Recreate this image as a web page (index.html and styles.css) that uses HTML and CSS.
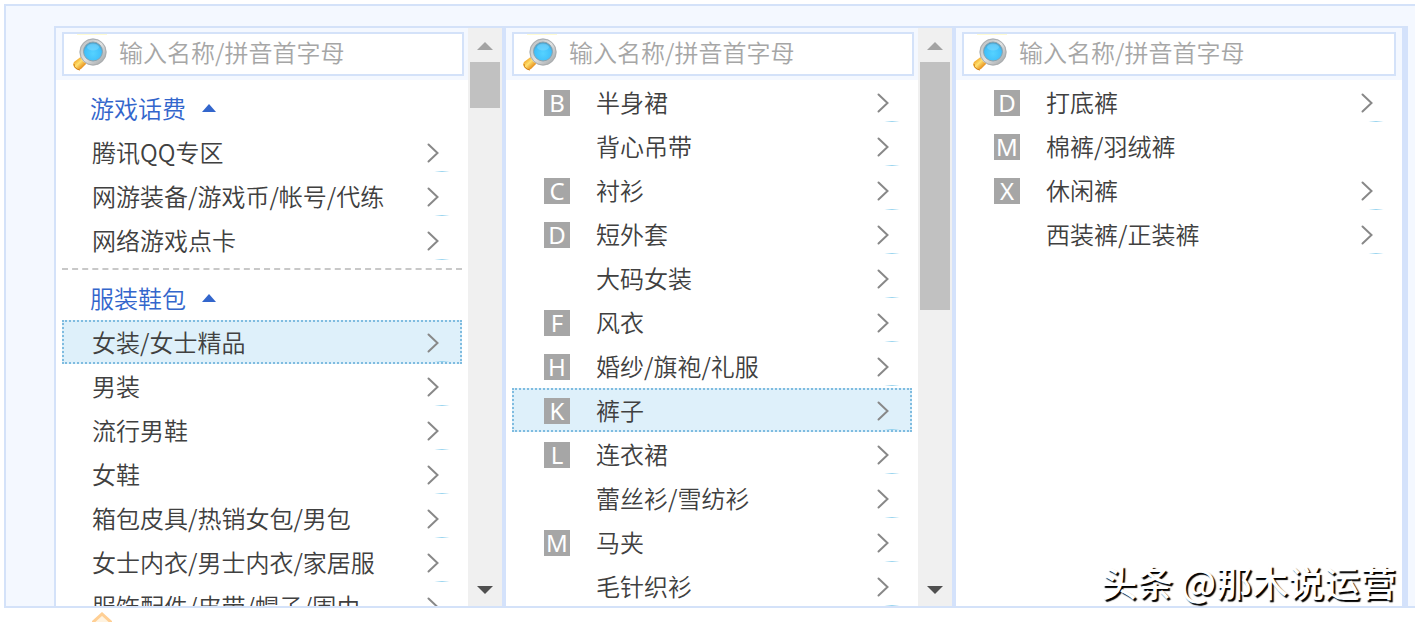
FILE: index.html
```
<!DOCTYPE html>
<html lang="zh-CN">
  <head>
    <meta charset="UTF-8" />
    <meta name="viewport" content="width=device-width, initial-scale=1.0">
    <title>选择类目</title>
    <link rel="stylesheet" href="styles.css">
  </head>
  <body>
    <svg class="defs" width="0" height="0" aria-hidden="true">
      <defs>
        <radialGradient id="lens" cx="50%" cy="60%" r="55%">
          <stop offset="0" stop-color="#55d2ff" />
          <stop offset="0.8" stop-color="#41c0fa" />
          <stop offset="1" stop-color="#4a9fc8" />
        </radialGradient>
        <linearGradient id="rim" x1="0" y1="0" x2="1" y2="1">
          <stop offset="0" stop-color="#b4b8ba" />
          <stop offset="0.5" stop-color="#dfe1e2" />
          <stop offset="1" stop-color="#999c9e" />
        </linearGradient>
        <linearGradient id="handle" x1="0" y1="0" x2="1" y2="1">
          <stop offset="0.2" stop-color="#f0a020" />
          <stop offset="0.45" stop-color="#ffe070" />
          <stop offset="0.8" stop-color="#e07c08" />
        </linearGradient>
        <radialGradient id="glow">
          <stop offset="0" stop-color="#7cc8ea" stop-opacity="0.8" />
          <stop offset="1" stop-color="#7cc8ea" stop-opacity="0" />
        </radialGradient>
        <symbol id="icon-search" viewBox="0 0 36 40">
          <rect x="5" y="0" width="30" height="1" fill="#fffbd2" />
          <path d="M10 22l6 6-7 7q-3 2-6-1t-1-6z" fill="url(#handle)" />
          <path d="M2 30q0 5 6 6" fill="none" stroke="#d07a10" stroke-width="1" />
          <circle cx="21" cy="18" r="13.500" fill="url(#rim)" />
          <circle cx="21" cy="18" r="13" fill="none" stroke="#aaadaf" stroke-width="1" />
          <circle cx="21" cy="17.500" r="9.500" fill="url(#lens)" stroke="#8ba3ae" stroke-width="1" />
          <ellipse cx="21" cy="13" rx="6" ry="3.500" fill="#aee9ff" opacity="0.3" />
        </symbol>
        <symbol id="icon-next" viewBox="0 0 24 44">
          <path d="M2.500 14.500l9 8.500-9 8.500" fill="none" stroke="#888" stroke-width="2" stroke-linecap="round" />
          <ellipse cx="16" cy="41.500" rx="8" ry="0.700" fill="url(#glow)" />
        </symbol>
      </defs>
    </svg>

    <main class="panel">
      <div class="columns">
        <section class="column">
          <div class="content">
            <label class="search">
              <svg class="search-icon" aria-hidden="true"><use href="#icon-search" /></svg>
              <input type="text" placeholder="输入名称/拼音首字母" aria-label="搜索一级类目">
            </label>
            <div class="group">
              <button type="button" class="group-title">游戏话费 <span class="caret"></span></button>
              <ul class="list">
                <li><a href="#" class="item">腾讯QQ专区<svg class="next"><use href="#icon-next" /></svg></a></li>
                <li><a href="#" class="item">网游装备/游戏币/帐号/代练<svg class="next"><use href="#icon-next" /></svg></a></li>
                <li><a href="#" class="item">网络游戏点卡<svg class="next"><use href="#icon-next" /></svg></a></li>
              </ul>
            </div>
            <div class="group">
              <button type="button" class="group-title">服装鞋包 <span class="caret"></span></button>
              <ul class="list">
                <li><a href="#" class="item selected">女装/女士精品<svg class="next"><use href="#icon-next" /></svg></a></li>
                <li><a href="#" class="item">男装<svg class="next"><use href="#icon-next" /></svg></a></li>
                <li><a href="#" class="item">流行男鞋<svg class="next"><use href="#icon-next" /></svg></a></li>
                <li><a href="#" class="item">女鞋<svg class="next"><use href="#icon-next" /></svg></a></li>
                <li><a href="#" class="item">箱包皮具/热销女包/男包<svg class="next"><use href="#icon-next" /></svg></a></li>
                <li><a href="#" class="item">女士内衣/男士内衣/家居服<svg class="next"><use href="#icon-next" /></svg></a></li>
                <li><a href="#" class="item">服饰配件/皮带/帽子/围巾<svg class="next"><use href="#icon-next" /></svg></a></li>
              </ul>
            </div>
          </div>
          <div class="scrollbar">
            <span class="arrow-up"></span>
            <span class="thumb thumb-short"></span>
            <span class="arrow-down"></span>
          </div>
        </section>

        <section class="column">
          <div class="content">
            <label class="search">
              <svg class="search-icon" aria-hidden="true"><use href="#icon-search" /></svg>
              <input type="text" placeholder="输入名称/拼音首字母" aria-label="搜索二级类目">
            </label>
            <ul class="list indexed">
              <li><a href="#" class="item"><span class="letter">B</span>半身裙<svg class="next"><use href="#icon-next" /></svg></a></li>
              <li><a href="#" class="item"><span class="letter empty"></span>背心吊带<svg class="next"><use href="#icon-next" /></svg></a></li>
              <li><a href="#" class="item"><span class="letter">C</span>衬衫<svg class="next"><use href="#icon-next" /></svg></a></li>
              <li><a href="#" class="item"><span class="letter">D</span>短外套<svg class="next"><use href="#icon-next" /></svg></a></li>
              <li><a href="#" class="item"><span class="letter empty"></span>大码女装<svg class="next"><use href="#icon-next" /></svg></a></li>
              <li><a href="#" class="item"><span class="letter">F</span>风衣<svg class="next"><use href="#icon-next" /></svg></a></li>
              <li><a href="#" class="item"><span class="letter">H</span>婚纱/旗袍/礼服<svg class="next"><use href="#icon-next" /></svg></a></li>
              <li><a href="#" class="item selected"><span class="letter">K</span>裤子<svg class="next"><use href="#icon-next" /></svg></a></li>
              <li><a href="#" class="item"><span class="letter">L</span>连衣裙<svg class="next"><use href="#icon-next" /></svg></a></li>
              <li><a href="#" class="item"><span class="letter empty"></span>蕾丝衫/雪纺衫<svg class="next"><use href="#icon-next" /></svg></a></li>
              <li><a href="#" class="item"><span class="letter">M</span>马夹<svg class="next"><use href="#icon-next" /></svg></a></li>
              <li><a href="#" class="item"><span class="letter empty"></span>毛针织衫<svg class="next"><use href="#icon-next" /></svg></a></li>
            </ul>
          </div>
          <div class="scrollbar">
            <span class="arrow-up"></span>
            <span class="thumb thumb-long"></span>
            <span class="arrow-down"></span>
          </div>
        </section>

        <section class="column column-last">
          <div class="content">
            <label class="search">
              <svg class="search-icon" aria-hidden="true"><use href="#icon-search" /></svg>
              <input type="text" placeholder="输入名称/拼音首字母" aria-label="搜索三级类目">
            </label>
            <ul class="list indexed">
              <li><a href="#" class="item"><span class="letter">D</span>打底裤<svg class="next"><use href="#icon-next" /></svg></a></li>
              <li><a href="#" class="item"><span class="letter">M</span>棉裤/羽绒裤</a></li>
              <li><a href="#" class="item"><span class="letter">X</span>休闲裤<svg class="next"><use href="#icon-next" /></svg></a></li>
              <li><a href="#" class="item"><span class="letter empty"></span>西装裤/正装裤<svg class="next"><use href="#icon-next" /></svg></a></li>
            </ul>
          </div>
        </section>
      </div>
      <div class="watermark">头条 @那木说运营</div>
    </main>

    <svg class="pointer" viewBox="0 0 20 10" aria-hidden="true">
      <path d="M0 11l10-9 10 9" fill="#fff3e0" stroke="#ffcf94" stroke-width="3" />
    </svg>
  </body>
</html>
```

FILE: styles.css
```
* {
  box-sizing: border-box;
}

body {
  margin: 0;
  padding-top: 4px;
  font-family: 'Noto Sans CJK SC', sans-serif;
  font-size: 24px;
  font-weight: 350;
  color: #404040;
  background: #fff;
  overflow: hidden;
}

.defs {
  position: absolute;
}

.panel {
  position: relative;
  margin-left: 4px;
  padding: 20px 7px 0 48px;
  border: 2px solid #d4e2f9;
  border-right: none;
  background: #f4f8ff;
}

.columns {
  display: flex;
  height: 580px;
  border-top: 2px solid #d4e2f9;
  border-left: 2px solid #d4e2f9;
}

.column {
  display: flex;
  flex: 1;
  min-width: 0;
  overflow: hidden;
  border-right: 4px solid #d4e2fb;
  background: #fff;
}

.column-last {
  border-right-width: 6px;
}

.content {
  flex: 1;
  min-width: 0;
}

/* Search box */
.search {
  display: flex;
  align-items: center;
  height: 52px;
  padding: 4px 4px 4px 6px;
  background: #f4f8ff;
  position: relative;
}

.column-last .search {
  padding-right: 6px;
}

.search-icon {
  position: absolute;
  left: 16px;
  top: 6px;
  width: 36px;
  height: 40px;
  pointer-events: none;
}

.search input {
  width: 100%;
  height: 44px;
  padding: 0 8px 5px 55px;
  border: 2px solid #d4e2f9;
  border-radius: 0;
  outline: none;
  background: #fff;
  font: inherit;
  color: #404040;
}

.search input::placeholder {
  color: #a6a6a6;
}

/* Category groups */
.group {
  margin: 0 6px;
  padding-top: 6px;
}

.group + .group {
  margin-top: 6px;
  border-top: 2px dashed #c8c8c8;
}

.group .list {
  margin: 0;
}

.group-title {
  display: flex;
  align-items: center;
  gap: 16px;
  width: 100%;
  height: 44px;
  padding: 0 28px 2px;
  border: none;
  background: none;
  font: inherit;
  color: #3366cc;
  cursor: pointer;
}

.caret {
  margin-top: 2px;
  border: 7px solid transparent;
  border-top: none;
  border-bottom: 8px solid #3366cc;
}

.list {
  margin: 0 6px;
  padding: 0;
  list-style: none;
}

.item {
  display: flex;
  align-items: center;
  height: 44px;
  padding: 0 10px 2px 28px;
  border: 2px solid transparent;
  color: inherit;
  white-space: nowrap;
  text-decoration: none;
}

.indexed .item {
  padding-left: 30px;
}

.item:hover,
.selected {
  border: 2px dotted #7fbce0;
  background: #def0fa;
}

.next {
  width: 24px;
  height: 44px;
  margin: 0 0 -2px auto;
  flex-shrink: 0;
}

.letter {
  width: 26px;
  height: 26px;
  margin: 4px 26px 0 0;
  background: #a6a6a6;
  color: #fff;
  font-family: 'Noto Sans', sans-serif;
  font-weight: 400;
  line-height: 26px;
  text-align: center;
}

.empty {
  background: none;
}

/* Scrollbar */
.scrollbar {
  display: flex;
  flex-direction: column;
  align-items: center;
  width: 34px;
  background: #f0f0f0;
}

.arrow-up,
.arrow-down {
  border: 8px solid transparent;
}

.arrow-up {
  margin: 14px 0 12px;
  border-top: none;
  border-bottom-color: #a3a3a3;
}

.arrow-down {
  margin: auto 0 12px;
  border-bottom: none;
  border-top-color: #505050;
}

.thumb {
  width: 30px;
  background: #c1c1c1;
}

.thumb-short {
  height: 46px;
}

.thumb-long {
  height: 248px;
}

.watermark {
  position: absolute;
  right: 19px;
  bottom: 3px;
  color: #fff;
  font-size: 36px;
  font-weight: 500;
  line-height: 44px;
  text-shadow: 2px 2px 1px #000;
}

.pointer {
  display: block;
  width: 20px;
  height: 10px;
  margin: 4px 0 0 92px;
}
```
